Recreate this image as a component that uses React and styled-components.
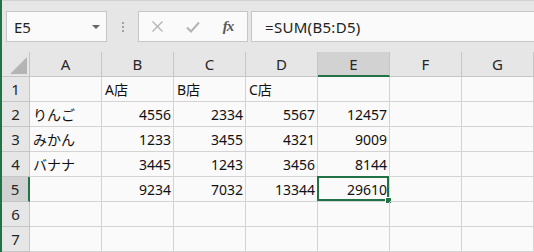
import React from "react";
import styled, { createGlobalStyle } from "styled-components";

const GlobalStyle = createGlobalStyle`
  html, body {
    margin: 0;
    padding: 0;
    background: #e6e6e6;
  }
  body {
    font-family: "Noto Sans", "Noto Sans CJK JP", sans-serif;
  }
`;

const GREEN = "#217346";

const Window = styled.div`
  width: 534px;
  height: 252px;
  overflow: hidden;
  background: #e6e6e6;
  border-left: 2px solid ${GREEN};
  box-sizing: border-box;
  display: flex;
  flex-direction: column;
`;

const Toolbar = styled.div`
  height: 52px;
  flex: none;
  box-sizing: border-box;
  border-top: 1px solid #d2d2d2;
  padding: 10px 0 0 4px;
  display: flex;
  align-items: flex-start;
`;

const NameBox = styled.div`
  width: 101px;
  height: 31px;
  box-sizing: border-box;
  background: #fafafa;
  border: 1px solid #c6c6c6;
  display: flex;
  align-items: center;
  justify-content: space-between;
  padding: 0 6px 0 7px;
  font-size: 15px;
  color: #222;
`;

const Caret = styled.span`
  width: 0;
  height: 0;
  border-left: 4px solid transparent;
  border-right: 4px solid transparent;
  border-top: 4px solid #666;
`;

const Divider = styled.div`
  width: 31px;
  height: 31px;
  display: flex;
  flex-direction: column;
  align-items: center;
  justify-content: center;
  gap: 2px;
`;

const Dot = styled.span`
  width: 2px;
  height: 2px;
  background: #a0a0a0;
`;

const FxButtons = styled.div`
  width: 110px;
  height: 31px;
  box-sizing: border-box;
  background: #fafafa;
  border: 1px solid #c6c6c6;
  display: grid;
  grid-template-columns: 36px 36px 1fr;
  align-items: center;
`;

const FxButton = styled.span`
  display: flex;
  justify-content: center;
  align-items: center;
  color: ${(p) => (p.active ? "#555" : "#b4b4b4")};
`;

const FxLabel = styled.span`
  font-family: "Liberation Serif", serif;
  font-style: italic;
  font-weight: bold;
  font-size: 15px;
  color: #5a5a5a;
  letter-spacing: -1px;
  margin-left: -2px;
`;

const FormulaInput = styled.div`
  flex: 1;
  margin-left: 3px;
  height: 31px;
  box-sizing: border-box;
  background: #fafafa;
  border: 1px solid #c6c6c6;
  border-right: none;
  display: flex;
  align-items: center;
  padding-left: 13px;
  font-size: 15px;
  letter-spacing: 0.3px;
  color: #222;
`;

const Sheet = styled.div`
  display: grid;
  grid-template-columns: 28px repeat(7, 72px);
  grid-auto-rows: 25px;
  background: #fafafa;
`;

const Corner = styled.div`
  position: relative;
  background: #e6e6e6;
  border-right: 1px solid #c6c6c6;
  border-bottom: 1px solid #c6c6c6;
  box-sizing: border-box;
  &::after {
    content: "";
    position: absolute;
    right: 2px;
    bottom: 2px;
    width: 0;
    height: 0;
    border-left: 17px solid transparent;
    border-bottom: 17px solid #b4b4b4;
  }
`;

const ColHead = styled.div`
  background: ${(p) => (p.selected ? "#d2d2d2" : "#e6e6e6")};
  border-right: 1px solid #c6c6c6;
  border-bottom: ${(p) => (p.selected ? `2px solid ${GREEN}` : "1px solid #c6c6c6")};
  box-sizing: border-box;
  display: flex;
  align-items: center;
  justify-content: center;
  font-size: 15px;
  color: #262626;
`;

const RowHead = styled.div`
  background: ${(p) => (p.selected ? "#d2d2d2" : "#e6e6e6")};
  border-right: ${(p) => (p.selected ? `2px solid ${GREEN}` : "1px solid #c6c6c6")};
  border-bottom: 1px solid #c6c6c6;
  box-sizing: border-box;
  display: flex;
  align-items: center;
  justify-content: center;
  font-size: 15px;
  color: #262626;
`;

const Cell = styled.div`
  position: relative;
  border-right: 1px solid #d4d4d4;
  border-bottom: 1px solid #d4d4d4;
  box-sizing: border-box;
  display: flex;
  align-items: center;
  justify-content: ${(p) => (p.num ? "flex-end" : "flex-start")};
  padding: ${(p) => (p.num ? "0 2px 0 0" : "0 0 0 3px")};
  font-size: 14px;
  color: #111;
  white-space: nowrap;
`;

const Selection = styled.div`
  position: absolute;
  left: -1px;
  top: -1px;
  right: 0;
  bottom: 0;
  border: 2px solid ${GREEN};
  pointer-events: none;
`;

const Handle = styled.div`
  position: absolute;
  right: -4px;
  bottom: -4px;
  width: 5px;
  height: 5px;
  background: ${GREEN};
  border: 1px solid #fff;
  border-right: none;
  border-bottom: none;
`;

const columns = ["A", "B", "C", "D", "E", "F", "G"];

const rows = [
  ["", "A店", "B店", "C店", "", "", ""],
  ["りんご", 4556, 2334, 5567, 12457, "", ""],
  ["みかん", 1233, 3455, 4321, 9009, "", ""],
  ["バナナ", 3445, 1243, 3456, 8144, "", ""],
  ["", 9234, 7032, 13344, 29610, "", ""],
  ["", "", "", "", "", "", ""],
  ["", "", "", "", "", "", ""],
];

const active = { row: 4, col: 4 };

function App() {
  return (
    <>
      <GlobalStyle />
      <Window>
        <Toolbar>
          <NameBox>
            E5
            <Caret />
          </NameBox>
          <Divider>
            <Dot />
            <Dot />
            <Dot />
          </Divider>
          <FxButtons>
            <FxButton>
              <svg width="13" height="13" viewBox="0 0 13 13">
                <path d="M1.5 1.5 L11.5 11.5 M11.5 1.5 L1.5 11.5" stroke="currentColor" strokeWidth="1.4" fill="none" />
              </svg>
            </FxButton>
            <FxButton>
              <svg width="14" height="12" viewBox="0 0 14 12">
                <path d="M1 6.5 L5 10.5 L13 1.5" stroke="currentColor" strokeWidth="2" fill="none" />
              </svg>
            </FxButton>
            <FxButton active>
              <FxLabel>fx</FxLabel>
            </FxButton>
          </FxButtons>
          <FormulaInput>=SUM(B5:D5)</FormulaInput>
        </Toolbar>
        <Sheet>
          <Corner />
          {columns.map((c, i) => (
            <ColHead key={c} selected={i === active.col}>
              {c}
            </ColHead>
          ))}
          {rows.map((r, ri) => (
            <React.Fragment key={ri}>
              <RowHead selected={ri === active.row}>{ri + 1}</RowHead>
              {r.map((v, ci) => (
                <Cell key={ci} num={typeof v === "number"}>
                  {v}
                  {ri === active.row && ci === active.col && (
                    <Selection>
                      <Handle />
                    </Selection>
                  )}
                </Cell>
              ))}
            </React.Fragment>
          ))}
        </Sheet>
      </Window>
    </>
  );
}

export default App;
